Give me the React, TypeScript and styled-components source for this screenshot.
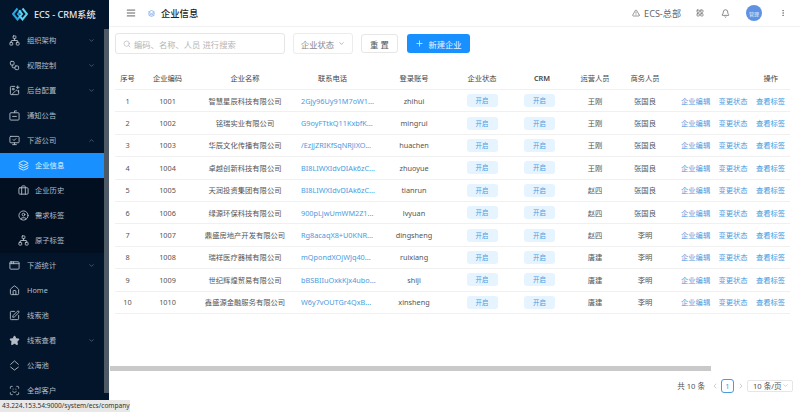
import styled, { createGlobalStyle } from "styled-components";
import {
  AppWindow,
  Bell,
  Briefcase,
  ChevronDown,
  ChevronLeft,
  ChevronRight,
  ChevronUp,
  CircleUser,
  EllipsisVertical,
  House,
  LayoutGrid,
  MonitorCheck,
  Network,
  Plus,
  ScanFace,
  Search,
  SquarePen,
  Star,
  TextAlignJustify,
  TriangleAlert,
  Workflow,
  ImagePlus,
  Layers,
} from "lucide-react";
import type { ReactNode } from "react";

type MenuItem = {
  label: string;
  icon: ReactNode;
  arrow?: "down" | "up";
  child?: boolean;
  active?: boolean;
};

const iconSize = 11;

function NoticeIcon() {
  return (
    <svg width="11" height="11" viewBox="0 0 12 12" fill="none" stroke="currentColor" strokeWidth="1">
      <rect x="1" y="3" width="10" height="8" rx="1" />
      <path d="M6 3V1h2.5M3.5 7h5" />
    </svg>
  );
}

function SeaIcon() {
  return (
    <svg width="11" height="11" viewBox="0 0 12 12" fill="none" stroke="currentColor" strokeWidth="1">
      <path d="M1.5 5 6 1l4.5 4M1.5 7.5 6 11l4.5-3.5" />
    </svg>
  );
}

const menu: MenuItem[] = [
  { label: "组织架构", icon: <Network size={iconSize} />, arrow: "down" },
  { label: "权限控制", icon: <Workflow size={iconSize} />, arrow: "down" },
  { label: "后台配置", icon: <ImagePlus size={iconSize} />, arrow: "down" },
  { label: "通知公告", icon: <NoticeIcon /> },
  { label: "下游公司", icon: <MonitorCheck size={iconSize} />, arrow: "up" },
  { label: "企业信息", icon: <Layers size={iconSize} />, child: true, active: true },
  { label: "企业历史", icon: <Briefcase size={iconSize} />, child: true },
  { label: "需求标签", icon: <CircleUser size={iconSize} />, child: true },
  { label: "原子标签", icon: <Network size={iconSize} />, child: true },
  { label: "下游统计", icon: <AppWindow size={iconSize} />, arrow: "down" },
  { label: "Home", icon: <House size={iconSize} /> },
  { label: "线索池", icon: <SquarePen size={iconSize} /> },
  { label: "线索查看", icon: <Star size={iconSize} fill="currentColor" />, arrow: "down" },
  { label: "公海池", icon: <SeaIcon /> },
  { label: "全部客户", icon: <ScanFace size={iconSize} /> },
];

const companies = [
  { code: 1001, name: "智慧星辰科技有限公司", phone: "2Gjy96Uy91M7oW1...", account: "zhihui", ops: "王刚", biz: "张国良" },
  { code: 1002, name: "铭瑞实业有限公司", phone: "G9oyFTtkQ11KxbfK...", account: "mingrui", ops: "王刚", biz: "张国良" },
  { code: 1003, name: "华辰文化传播有限公司", phone: "/EzjjZRIKfSqNRJiXO...", account: "huachen", ops: "王刚", biz: "张国良" },
  { code: 1004, name: "卓越创新科技有限公司", phone: "BI8LIWXIdvDIAk6zC...", account: "zhuoyue", ops: "王刚", biz: "张国良" },
  { code: 1005, name: "天润投资集团有限公司", phone: "BI8LIWXIdvDIAk6zC...", account: "tianrun", ops: "赵四", biz: "张国良" },
  { code: 1006, name: "绿源环保科技有限公司", phone: "900pLjwUmWM2Z1...", account: "lvyuan", ops: "赵四", biz: "张国良" },
  { code: 1007, name: "鼎盛房地产开发有限公司", phone: "Rg8acaqX8+U0KNR...", account: "dingsheng", ops: "赵四", biz: "李明" },
  { code: 1008, name: "瑞祥医疗器械有限公司", phone: "mQpondXOjWJq40...", account: "ruixiang", ops: "唐建", biz: "李明" },
  { code: 1009, name: "世纪辉煌贸易有限公司", phone: "bBSBIIuOxkKjx4ubo...", account: "shiji", ops: "唐建", biz: "李明" },
  { code: 1010, name: "鑫盛源金融服务有限公司", phone: "W6y7vOUTGr4QxB...", account: "xinsheng", ops: "唐建", biz: "李明" },
];

const GlobalStyle = createGlobalStyle`
  html, body {
    margin: 0;
    padding: 0;
    background: #fff;
  }
  body {
    font-family: "Noto Sans", "Noto Sans CJK SC", sans-serif;
    font-size: 7.3px;
    color: #555;
  }
  * {
    box-sizing: border-box;
  }
`;

const Page = styled.div`
  position: relative;
  display: flex;
  width: 800px;
  height: 412px;
  overflow: hidden;
`;

const Sidebar = styled.aside`
  position: relative;
  flex: 0 0 109px;
  background: #03152b;
  color: #b4bcc6;
`;

const Logo = styled.div`
  display: flex;
  align-items: center;
  gap: 6px;
  height: 27.5px;
  padding-left: 12px;
  color: #e3e7ec;
  font-size: 9.1px;
  font-weight: 500;
  white-space: nowrap;
`;

const SideScroll = styled.div`
  position: absolute;
  top: 29px;
  right: 0;
  bottom: 19px;
  width: 5px;
  background: #4d5a66;
`;

const Menu = styled.nav`
  width: 104px;
`;

const MenuRow = styled.div<{ $child?: boolean; $active?: boolean }>`
  display: flex;
  align-items: center;
  height: 25px;
  padding-left: ${({ $child }) => ($child ? "18px" : "9px")};
  gap: ${({ $child }) => ($child ? "6px" : "7px")};
  background: ${({ $active, $child }) =>
    $active ? "#1890ff" : $child ? "#020f20" : "transparent"};
  color: ${({ $active }) => ($active ? "#e6f3ff" : "inherit")};
`;

const MenuIcon = styled.span`
  display: flex;
  flex: 0 0 10px;
  justify-content: center;
`;

const MenuLabel = styled.span`
  flex: 1;
`;

const MenuArrow = styled.span`
  display: flex;
  margin-right: 9px;
  color: #717b88;
`;

const Main = styled.main`
  display: flex;
  flex: 1;
  flex-direction: column;
  min-width: 0;
`;

const Header = styled.header`
  display: flex;
  flex: 0 0 27px;
  align-items: center;
  padding: 0 13px 0 17px;
  border-bottom: 1px solid #f1f1f1;
`;

const Crumb = styled.div`
  display: flex;
  align-items: center;
  margin-left: 12px;
  gap: 6px;
  flex: 1;
  color: #222;
  font-size: 9.3px;
  font-weight: 500;
`;

const CrumbDot = styled.span`
  display: flex;
  color: #5b8fde;
`;

const Tools = styled.div`
  display: flex;
  align-items: center;
  color: #666;
`;

const Org = styled.span`
  display: flex;
  align-items: center;
  gap: 4px;
  margin-right: 15px;
  font-size: 9.1px;
`;

const Avatar = styled.span`
  display: grid;
  place-items: center;
  width: 16px;
  height: 16px;
  margin: 0 17px 0 16px;
  border-radius: 50%;
  background: #5f92e2;
  color: #e8effb;
  font-size: 5px;
`;

const BellWrap = styled.span`
  display: flex;
  margin-left: 17px;
`;

const Content = styled.div`
  display: flex;
  flex: 1;
  flex-direction: column;
  padding: 6px 10px 0 6px;
`;

const Toolbar = styled.div`
  display: flex;
  align-items: center;
  height: 21px;
  font-size: 8.3px;
`;

const SearchBox = styled.div`
  display: flex;
  align-items: center;
  gap: 3px;
  width: 170px;
  height: 21px;
  padding-left: 7px;
  border: 1px solid #e6e6e6;
  border-radius: 3px;
  color: #b5b5b5;
`;

const Select = styled.div`
  display: flex;
  align-items: center;
  justify-content: center;
  gap: 4px;
  width: 60px;
  height: 21px;
  margin-left: 8px;
  border: 1px solid #ececec;
  border-radius: 3px;
  color: #888;
`;

const ResetButton = styled.button`
  width: 37px;
  height: 19px;
  margin-left: 8px;
  padding: 0;
  border: 1px solid #e6e6e6;
  border-radius: 3px;
  background: #fff;
  color: #555;
  font: inherit;
`;

const PrimaryButton = styled.button`
  display: flex;
  align-items: center;
  justify-content: center;
  gap: 4px;
  width: 63px;
  height: 19px;
  margin-left: 9px;
  padding: 0;
  border: 0;
  border-radius: 3px;
  background: #1890ff;
  color: #e8f4ff;
  font: inherit;
`;

const columns = "25px 55px 100px 75px 88px 48px 72px 34px 66px 112px";

const Table = styled.div`
  margin-top: 12px;
`;

const Row = styled.div<{ $head?: boolean }>`
  display: grid;
  grid-template-columns: ${columns};
  align-items: center;
  height: ${({ $head }) => ($head ? "24px" : "22.4px")};
  border-bottom: 1px solid #f0f0f0;
  text-align: center;
  color: ${({ $head }) => ($head ? "#444" : "#555")};
`;

const Cell = styled.div`
  white-space: nowrap;
`;

const CrmHead = styled(Cell)`
  font-weight: 600;
`;

const OpsHead = styled(Cell)`
  padding-right: 12px;
  text-align: right;
`;

const Phone = styled.div`
  padding-left: 6px;
  color: #4a9be0;
  text-align: left;
  white-space: nowrap;
`;

const Badge = styled.span`
  display: inline-block;
  width: 31px;
  height: 13px;
  border-radius: 3px;
  background: #e6f4ff;
  color: #4a9be0;
  font-size: 6.4px;
  line-height: 13px;
`;

const CrmBadge = styled(Badge)`
  margin-right: 5px;
`;

const Actions = styled.div`
  display: flex;
  gap: 8.3px;
  padding-left: 3px;
  color: #4a9be0;
  white-space: nowrap;
`;

const ScrollBar = styled.div`
  width: 601px;
  height: 5px;
  margin: 52px 0 0 -5px;
  background: #c9c9c9;
`;

const Pagination = styled.div`
  display: flex;
  align-items: center;
  justify-content: flex-end;
  height: 14px;
  margin: 8px -3px 0 0;
  font-size: 7.6px;
`;

const PageArrow = styled.span`
  display: flex;
  margin: 0 2.5px;
  color: #b5b5b5;
`;

const PageNum = styled.span`
  display: grid;
  place-items: center;
  width: 13px;
  height: 14px;
  border: 1px solid #4a9be0;
  border-radius: 3px;
  color: #4a9be0;
`;

const PageSize = styled.span`
  display: flex;
  align-items: center;
  justify-content: space-between;
  width: 46px;
  height: 12px;
  padding: 0 3px 0 5px;
  border: 1px solid #e6e6e6;
  border-radius: 2px;
`;

const PageTotal = styled.span`
  margin-right: 3px;
`;

const StatusTip = styled.div`
  position: absolute;
  left: 0;
  bottom: 0;
  width: 130px;
  height: 12px;
  padding-left: 2px;
  background: #e8e8e8;
  color: #333;
  font-family: "Noto Sans", sans-serif;
  font-size: 6.6px;
  line-height: 12px;
  white-space: nowrap;
`;

function LogoMark() {
  return (
    <svg width="16" height="14" viewBox="0 0 16 14" fill="none">
      <path d="M5.5 1.5 1 7l4.5 5.5L8 9.5 6 7l3-3.6" stroke="#29a8e8" strokeWidth="2" />
      <path d="M10.5 1.5 15 7l-4.5 5.5L8 9.5 10 7 7 3.4" stroke="#5fd4f0" strokeWidth="2" />
    </svg>
  );
}

export default function App() {
  return (
    <Page>
      <GlobalStyle />
      <Sidebar>
        <Logo>
          <LogoMark />
          ECS - CRM系统
        </Logo>
        <SideScroll />
        <Menu>
          {menu.map((item) => (
            <MenuRow key={item.label} $child={item.child} $active={item.active}>
              <MenuIcon>{item.icon}</MenuIcon>
              <MenuLabel>{item.label}</MenuLabel>
              {item.arrow && (
                <MenuArrow>
                  {item.arrow === "down" ? <ChevronDown size={7} /> : <ChevronUp size={7} />}
                </MenuArrow>
              )}
            </MenuRow>
          ))}
        </Menu>
      </Sidebar>

      <Main>
        <Header>
          <TextAlignJustify size={10} color="#444" />
          <Crumb>
            <CrumbDot>
              <Layers size={7} />
            </CrumbDot>
            企业信息
          </Crumb>
          <Tools>
            <Org>
              <TriangleAlert size={8} />
              ECS-总部
            </Org>
            <LayoutGrid size={8} />
            <BellWrap>
              <Bell size={9} />
            </BellWrap>
            <Avatar>管理</Avatar>
            <EllipsisVertical size={8} />
          </Tools>
        </Header>

        <Content>
          <Toolbar>
            <SearchBox>
              <Search size={8} />
              编码、名称、人员 进行搜索
            </SearchBox>
            <Select>
              企业状态
              <ChevronDown size={7} />
            </Select>
            <ResetButton>重 置</ResetButton>
            <PrimaryButton>
              <Plus size={9} />
              新建企业
            </PrimaryButton>
          </Toolbar>

          <Table>
            <Row $head>
              <Cell>序号</Cell>
              <Cell>企业编码</Cell>
              <Cell>企业名称</Cell>
              <Cell>联系电话</Cell>
              <Cell>登录账号</Cell>
              <Cell>企业状态</Cell>
              <CrmHead>CRM</CrmHead>
              <Cell>运营人员</Cell>
              <Cell>商务人员</Cell>
              <OpsHead>操作</OpsHead>
            </Row>
            {companies.map((c, i) => (
              <Row key={c.code}>
                <Cell>{i + 1}</Cell>
                <Cell>{c.code}</Cell>
                <Cell>{c.name}</Cell>
                <Phone>{c.phone}</Phone>
                <Cell>{c.account}</Cell>
                <Cell>
                  <Badge>开启</Badge>
                </Cell>
                <Cell>
                  <CrmBadge>开启</CrmBadge>
                </Cell>
                <Cell>{c.ops}</Cell>
                <Cell>{c.biz}</Cell>
                <Actions>
                  <span>企业编辑</span>
                  <span>变更状态</span>
                  <span>查看标签</span>
                </Actions>
              </Row>
            ))}
          </Table>

          <ScrollBar />

          <Pagination>
            <PageTotal>共 10 条</PageTotal>
            <PageArrow>
              <ChevronLeft size={8} />
            </PageArrow>
            <PageNum>1</PageNum>
            <PageArrow>
              <ChevronRight size={8} />
            </PageArrow>
            <PageSize>
              10 条/页
              <ChevronDown size={7} color="#b5b5b5" />
            </PageSize>
          </Pagination>
        </Content>
      </Main>

      <StatusTip>43.224.153.54:9000/system/ecs/company</StatusTip>
    </Page>
  );
}
